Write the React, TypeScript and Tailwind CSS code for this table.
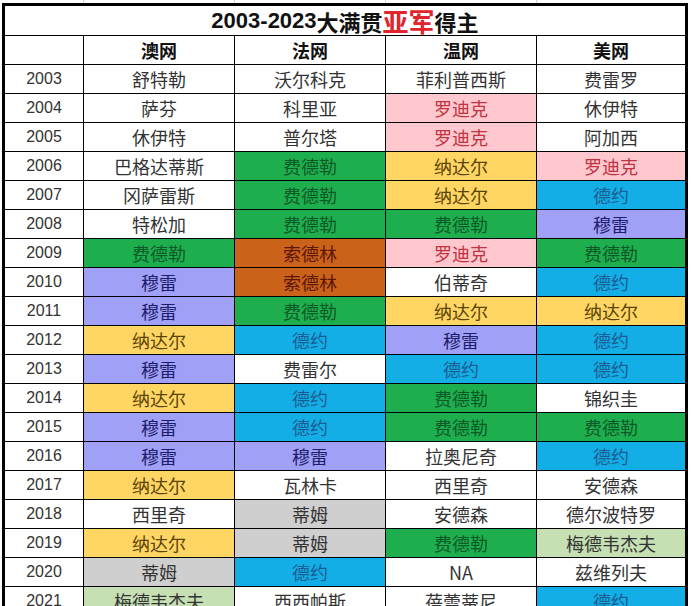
type Tone = 'w' | 'g' | 'y' | 'p' | 'b' | 'u' | 'o' | 'x' | 'l';

const tones: Record<Tone, string> = {
  w: 'bg-white text-[#333333]',
  g: 'bg-[#1fae4e] text-[#0c5a26]',
  y: 'bg-[#ffd564] text-[#5a4406]',
  p: 'bg-[#ffc7ce] text-[#c2323f]',
  b: 'bg-[#14aee6] text-[#1a5d92]',
  u: 'bg-[#a0a0f7] text-[#1d1d6a]',
  o: 'bg-[#cb621a] text-[#5c1709]',
  x: 'bg-[#cfcfcf] text-[#333333]',
  l: 'bg-[#c6e0b4] text-[#333333]',
};

type Cell = [string, Tone];

const rows: { year: string; cells: Cell[] }[] = [
  { year: '2003', cells: [['舒特勒', 'w'], ['沃尔科克', 'w'], ['菲利普西斯', 'w'], ['费雷罗', 'w']] },
  { year: '2004', cells: [['萨芬', 'w'], ['科里亚', 'w'], ['罗迪克', 'p'], ['休伊特', 'w']] },
  { year: '2005', cells: [['休伊特', 'w'], ['普尔塔', 'w'], ['罗迪克', 'p'], ['阿加西', 'w']] },
  { year: '2006', cells: [['巴格达蒂斯', 'w'], ['费德勒', 'g'], ['纳达尔', 'y'], ['罗迪克', 'p']] },
  { year: '2007', cells: [['冈萨雷斯', 'w'], ['费德勒', 'g'], ['纳达尔', 'y'], ['德约', 'b']] },
  { year: '2008', cells: [['特松加', 'w'], ['费德勒', 'g'], ['费德勒', 'g'], ['穆雷', 'u']] },
  { year: '2009', cells: [['费德勒', 'g'], ['索德林', 'o'], ['罗迪克', 'p'], ['费德勒', 'g']] },
  { year: '2010', cells: [['穆雷', 'u'], ['索德林', 'o'], ['伯蒂奇', 'w'], ['德约', 'b']] },
  { year: '2011', cells: [['穆雷', 'u'], ['费德勒', 'g'], ['纳达尔', 'y'], ['纳达尔', 'y']] },
  { year: '2012', cells: [['纳达尔', 'y'], ['德约', 'b'], ['穆雷', 'u'], ['德约', 'b']] },
  { year: '2013', cells: [['穆雷', 'u'], ['费雷尔', 'w'], ['德约', 'b'], ['德约', 'b']] },
  { year: '2014', cells: [['纳达尔', 'y'], ['德约', 'b'], ['费德勒', 'g'], ['锦织圭', 'w']] },
  { year: '2015', cells: [['穆雷', 'u'], ['德约', 'b'], ['费德勒', 'g'], ['费德勒', 'g']] },
  { year: '2016', cells: [['穆雷', 'u'], ['穆雷', 'u'], ['拉奥尼奇', 'w'], ['德约', 'b']] },
  { year: '2017', cells: [['纳达尔', 'y'], ['瓦林卡', 'w'], ['西里奇', 'w'], ['安德森', 'w']] },
  { year: '2018', cells: [['西里奇', 'w'], ['蒂姆', 'x'], ['安德森', 'w'], ['德尔波特罗', 'w']] },
  { year: '2019', cells: [['纳达尔', 'y'], ['蒂姆', 'x'], ['费德勒', 'g'], ['梅德韦杰夫', 'l']] },
  { year: '2020', cells: [['蒂姆', 'x'], ['德约', 'b'], ['NA', 'w'], ['兹维列夫', 'w']] },
  { year: '2021', cells: [['梅德韦杰夫', 'l'], ['西西帕斯', 'w'], ['蓓蕾蒂尼', 'w'], ['德约', 'b']] },
];

const cols = 'grid grid-cols-[79px_151px_151px_151px_148px]';
const cjk = "font-['Noto_Sans_CJK_SC',sans-serif]";

export default function App() {
  return (
    <div className="w-[691px] h-[606px] overflow-hidden bg-white">
      {/* faint sheet gridlines above the table */}
      <div className={`${cols} h-[3px] ml-[5px]`}>
        <div className="border-r border-[#d4d4d4]" />
        <div className="border-r border-[#d4d4d4]" />
        <div className="border-r border-[#d4d4d4]" />
        <div className="border-r border-[#d4d4d4]" />
        <div />
      </div>

      <div className="ml-[2px] w-[686px] border-x-[3px] border-t-[3px] border-black">
        <div className="h-[30px] border-b border-black flex items-center justify-center">
          <span className="font-['Liberation_Sans',sans-serif] font-bold text-[22px] text-[#111] leading-none">
            2003-2023
          </span>
          <span className={`${cjk} font-bold text-[22px] text-[#111] leading-none`}>大满贯</span>
          <span className={`${cjk} font-bold text-[26px] text-[#e0262c] leading-none`}>亚军</span>
          <span className={`${cjk} font-bold text-[22px] text-[#111] leading-none`}>得主</span>
        </div>

        <div className={`${cols} h-[29px]`}>
          {['', '澳网', '法网', '温网', '美网'].map((h, i) => (
            <div
              key={i}
              className={`${cjk} flex items-center justify-center border-b border-black font-bold text-[18px] text-[#111] ${
                i < 4 ? 'border-r' : ''
              }`}
            >
              {h}
            </div>
          ))}
        </div>

        {rows.map((r) => (
          <div key={r.year} className={`${cols} h-[29px]`}>
            <div className="flex items-center justify-center border-r border-b border-black font-['Liberation_Sans',sans-serif] text-[16px] text-[#333333]">
              {r.year}
            </div>
            {r.cells.map(([name, tone], i) => (
              <div
                key={i}
                className={`${cjk} flex items-center justify-center border-b border-black text-[18px] leading-none ${
                  tones[tone]
                } ${i < 3 ? 'border-r' : ''}`}
              >
                {name}
              </div>
            ))}
          </div>
        ))}
      </div>
    </div>
  );
}
